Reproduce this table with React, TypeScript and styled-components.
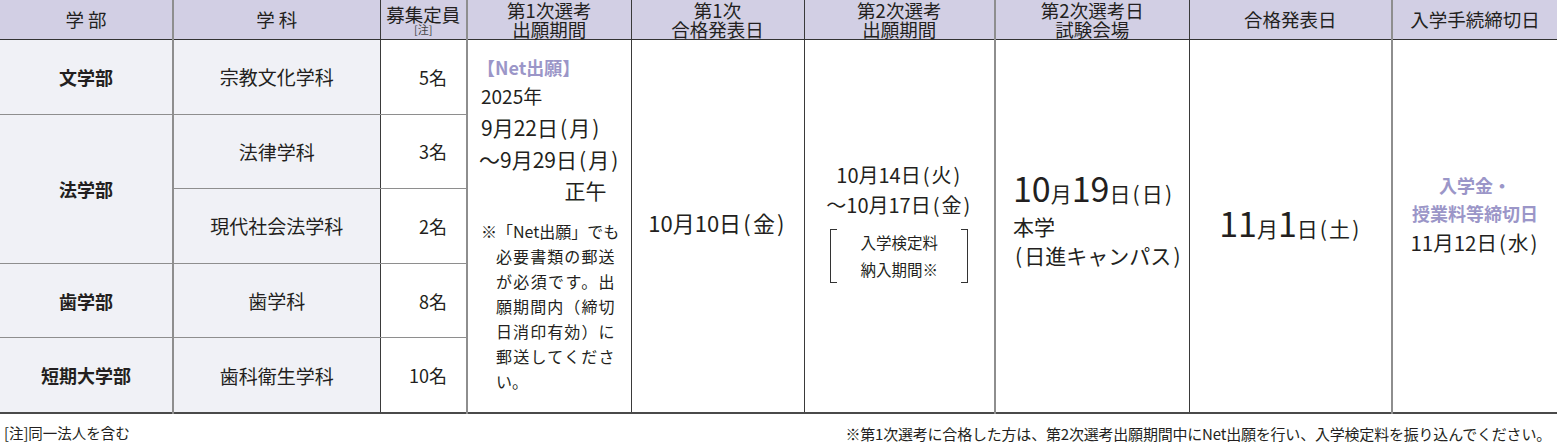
import React from "react";
import { styled, createGlobalStyle } from "styled-components";

const GlobalStyle = createGlobalStyle`
  html, body {
    margin: 0;
    padding: 0;
    background: #ffffff;
  }
  body {
    font-family: "Noto Sans CJK JP", "Noto Sans", sans-serif;
    color: #231f20;
  }
`;

type Tone = "gray" | "dark";

const lineColor = (tone: Tone) => (tone === "gray" ? "2px solid #8e8e8e" : "1px solid #3a3a3a");

const Page = styled.div`
  width: 1557px;
`;

const Table = styled.table`
  width: 1557px;
  border-collapse: collapse;
  table-layout: fixed;
  border-bottom: 2px solid #4a4a4a;
`;

const HeadCell = styled.th<{ $tone?: Tone }>`
  height: 39px;
  padding: 0;
  background: #d2cfe4;
  font-weight: 400;
  font-size: 18.5px;
  line-height: 19px;
  text-align: center;
  vertical-align: middle;
  border-bottom: 1px solid #333;
  border-right: ${(p) => (p.$tone ? lineColor(p.$tone) : "none")};
`;

const Note = styled.span`
  display: block;
  font-size: 11px;
  line-height: 11px;
  color: #444;
`;

const BodyCell = styled.td<{ $tone?: Tone; $shade?: boolean; $bold?: boolean; $align?: string }>`
  height: 73.6px;
  padding: 0;
  font-size: ${(p) => (p.$bold ? 18 : 19)}px;
  font-weight: ${(p) => (p.$bold ? 700 : 400)};
  text-align: ${(p) => p.$align || "center"};
  vertical-align: middle;
  background: ${(p) => (p.$shade ? "#f0f1f6" : "#ffffff")};
  border-bottom: 1px solid #8e8e8e;
  border-right: ${(p) => (p.$tone ? lineColor(p.$tone) : "none")};
`;

const CountCell = styled(BodyCell)`
  padding-right: 19px;
  font-size: 18px;
`;

const SpanCell = styled.td<{ $tone?: Tone; $pad?: string; $align?: string; $top?: boolean }>`
  padding: ${(p) => p.$pad || "0"};
  vertical-align: ${(p) => (p.$top ? "top" : "middle")};
  text-align: ${(p) => p.$align || "center"};
  border-right: ${(p) => (p.$tone ? lineColor(p.$tone) : "none")};
`;

const Accent = styled.div`
  color: #9b96c8;
  font-weight: 700;
  font-size: 18px;
  line-height: 28px;
  white-space: nowrap;
`;

const Line = styled.div<{ $size?: number; $h?: number; $align?: string }>`
  font-size: ${(p) => p.$size || 16}px;
  line-height: ${(p) => p.$h || 30}px;
  text-align: ${(p) => p.$align || "left"};
  white-space: nowrap;
`;

const Pr = styled.span`
  margin: 0 0.1em;
`;

const NoteBlock = styled.div`
  margin-top: 14px;
  font-size: 16px;
  line-height: 25px;
`;

const NoteLine = styled.div<{ $indent?: boolean; $last?: boolean }>`
  padding-left: ${(p) => (p.$indent ? "15px" : "0")};
  text-align: justify;
  text-align-last: ${(p) => (p.$last ? "left" : "justify")};
  white-space: nowrap;
`;

const Bracket = styled.div`
  position: relative;
  margin: 9px auto 0;
  width: 138px;
  padding: 0;
  font-size: 15.5px;
  line-height: 27px;
  text-align: center;
  &::before,
  &::after {
    content: "";
    position: absolute;
    top: 0;
    bottom: 0;
    width: 6px;
    border-top: 1px solid #333;
    border-bottom: 1px solid #333;
  }
  &::before {
    left: 0;
    border-left: 1px solid #333;
  }
  &::after {
    right: 0;
    border-right: 1px solid #333;
  }
`;

const BigDate = styled.div<{ $align?: string }>`
  font-size: 21px;
  line-height: 36px;
  text-align: ${(p) => p.$align || "left"};
  white-space: nowrap;
`;

const Num = styled.span`
  font-size: 34px;
`;

const Footer = styled.div`
  display: flex;
  justify-content: space-between;
  align-items: center;
  padding: 8px 6px 0 4px;
  line-height: 20px;
`;

const FootLeft = styled.span`
  font-size: 14.5px;
`;

const FootRight = styled.span`
  font-size: 15px;
  letter-spacing: -0.2px;
  padding-top: 2px;
`;

const Day = ({ d }: { d: string }) => (
  <>
    <Pr>(</Pr>
    {d}
    <Pr>)</Pr>
  </>
);

const widths = [173, 207, 87, 164, 173, 191, 194, 203, 165];

const departments = [
  { faculty: "文学部", dept: "宗教文化学科", count: "5名", span: 1 },
  { faculty: "法学部", dept: "法律学科", count: "3名", span: 2 },
  { faculty: "", dept: "現代社会法学科", count: "2名", span: 0 },
  { faculty: "歯学部", dept: "歯学科", count: "8名", span: 1 },
  { faculty: "短期大学部", dept: "歯科衛生学科", count: "10名", span: 1 },
];

const noteLines = [
  "※「Net出願」でも",
  "必要書類の郵送",
  "が必須です。出",
  "願期間内（締切",
  "日消印有効）に",
  "郵送してくださ",
  "い。",
];

export default function App() {
  return (
    <Page>
      <GlobalStyle />
      <Table>
        <colgroup>
          {widths.map((w, i) => (
            <col key={i} style={{ width: w }} />
          ))}
        </colgroup>
        <thead>
          <tr>
            <HeadCell $tone="gray">学 部</HeadCell>
            <HeadCell $tone="dark">学 科</HeadCell>
            <HeadCell $tone="gray">
              募集定員
              <Note>[注]</Note>
            </HeadCell>
            <HeadCell $tone="dark">
              第1次選考
              <br />
              出願期間
            </HeadCell>
            <HeadCell $tone="dark">
              第1次
              <br />
              合格発表日
            </HeadCell>
            <HeadCell $tone="gray">
              第2次選考
              <br />
              出願期間
            </HeadCell>
            <HeadCell $tone="dark">
              第2次選考日
              <br />
              試験会場
            </HeadCell>
            <HeadCell $tone="gray">合格発表日</HeadCell>
            <HeadCell>入学手続締切日</HeadCell>
          </tr>
        </thead>
        <tbody>
          {departments.map((d, i) => (
            <tr key={d.dept}>
              {d.span > 0 && (
                <BodyCell $tone="gray" $shade $bold rowSpan={d.span}>
                  {d.faculty}
                </BodyCell>
              )}
              <BodyCell $tone="dark" $shade>
                {d.dept}
              </BodyCell>
              <CountCell $tone="gray" $align="right">
                {d.count}
              </CountCell>
              {i === 0 && (
                <>
                  <SpanCell $tone="dark" rowSpan={5} $top $pad="13px 16px 0 9px" $align="left">
                    <Accent>【Net出願】</Accent>
                    <Line $size={19} $h={30} style={{ paddingLeft: 4 }}>2025年</Line>
                    <Line $size={21} $h={32} style={{ paddingLeft: 4 }}>
                      9月22日<Day d="月" />
                    </Line>
                    <Line $size={21} $h={32} style={{ paddingLeft: 2 }}>
                      ～9月29日<Day d="月" />
                    </Line>
                    <Line $size={21} $h={30} $align="right" style={{ paddingRight: 8 }}>
                      正午
                    </Line>
                    <NoteBlock style={{ paddingLeft: 4 }}>
                      {noteLines.map((l, j) => (
                        <NoteLine key={l} $indent={j > 0} $last={j === noteLines.length - 1}>
                          {l}
                        </NoteLine>
                      ))}
                    </NoteBlock>
                  </SpanCell>
                  <SpanCell $tone="dark" rowSpan={5} $pad="0 0 8px 0">
                    <Line $size={22} $h={30} $align="center">
                      10月10日<Day d="金" />
                    </Line>
                  </SpanCell>
                  <SpanCell $tone="gray" rowSpan={5} $pad="0 0 8px 0">
                    <Line $size={20} $h={30} $align="center">
                      10月14日<Day d="火" />
                    </Line>
                    <Line $size={20} $h={30} $align="center">
                      ～10月17日<Day d="金" />
                    </Line>
                    <Bracket>
                      入学検定料
                      <br />
                      納入期間※
                    </Bracket>
                  </SpanCell>
                  <SpanCell $tone="dark" rowSpan={5} $pad="0 0 12px 17px" $align="left">
                    <BigDate>
                      <Num>10</Num>月<Num>19</Num>日<Day d="日" />
                    </BigDate>
                    <Line $size={21} $h={30}>本学</Line>
                    <Line $size={21} $h={29}>
                      <Day d="日進キャンパス" />
                    </Line>
                  </SpanCell>
                  <SpanCell $tone="gray" rowSpan={5}>
                    <BigDate $align="center">
                      <Num>11</Num>月<Num>1</Num>日<Day d="土" />
                    </BigDate>
                  </SpanCell>
                  <SpanCell rowSpan={5} $pad="0 0 24px 0">
                    <Accent>入学金・</Accent>
                    <Accent>授業料等締切日</Accent>
                    <Line $size={20.5} $h={30} $align="center">
                      11月12日<Day d="水" />
                    </Line>
                  </SpanCell>
                </>
              )}
            </tr>
          ))}
        </tbody>
      </Table>
      <Footer>
        <FootLeft>[注]同一法人を含む</FootLeft>
        <FootRight>
          ※第1次選考に合格した方は、第2次選考出願期間中にNet出願を行い、入学検定料を振り込んでください。
        </FootRight>
      </Footer>
    </Page>
  );
}
